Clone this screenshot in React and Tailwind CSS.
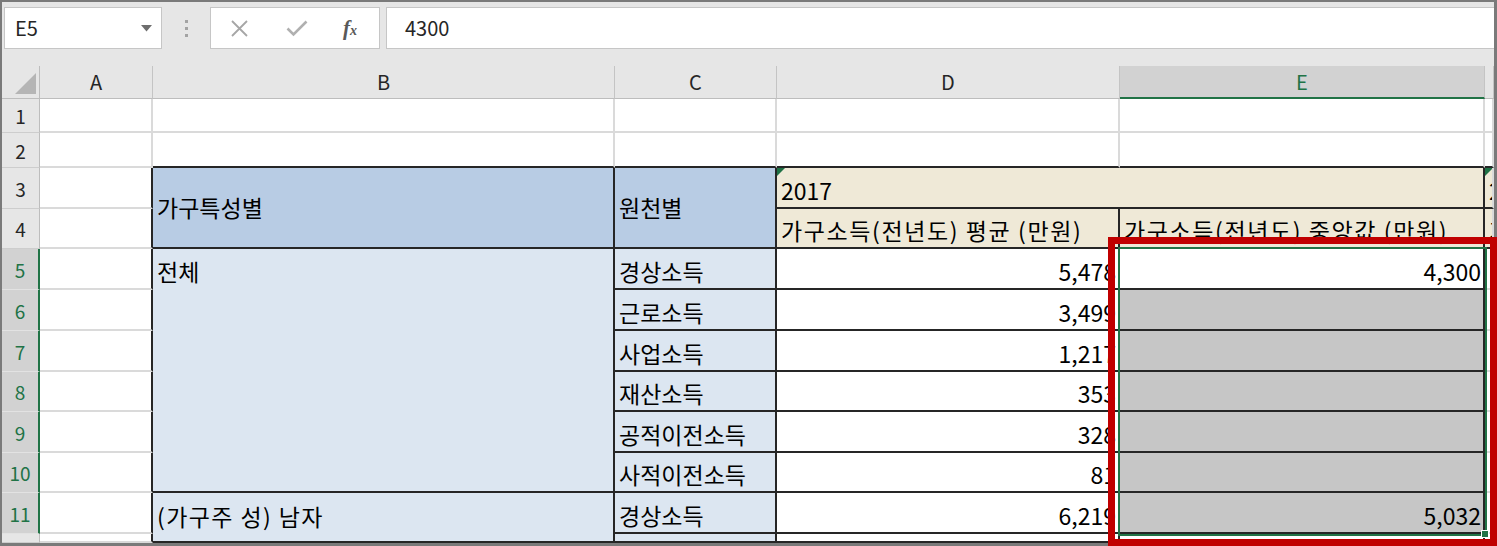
const FONT = "font-['Noto_Sans_CJK_KR','Noto_Sans',sans-serif]"

const GR = 'border-r-[#dadada]'
const GB = 'border-b-[#dadada]'
const DR = 'border-r-[#262626]'
const DB = 'border-b-[#262626]'

const HEAD = 'bg-[#b8cce4]'
const SOFT = 'bg-[#dce6f1]'
const TAN = 'bg-[#efe9d7]'
const SEL = 'bg-[#c6c6c6]'

function Cell({ bg = 'bg-white', r = GR, b = GB, className = '', children }) {
  return (
    <div className={`relative flex overflow-hidden whitespace-nowrap border-r-2 border-b-2 ${bg} ${r} ${b} ${className}`}>
      {children}
    </div>
  )
}

function Flag() {
  return <span className="absolute left-0 top-0 h-0 w-0 border-t-[8px] border-r-[8px] border-t-[#1e7145] border-r-transparent" />
}

function RowHead({ n, sel }) {
  return (
    <div
      className={`flex items-center justify-center border-b text-[19px] ${
        sel
          ? 'border-r-2 border-r-[#217346] border-b-[#e2e2e2] bg-[#d2d2d2] text-[#217346]'
          : 'border-r border-r-[#bdbdbd] border-b-[#cdcdcd] bg-[#e6e6e6] text-[#262626]'
      }`}
    >
      {n}
    </div>
  )
}

function ColHead({ l, sel }) {
  return (
    <div
      className={`flex items-center justify-center border-r border-r-[#c4c4c4] text-[20px] ${
        sel
          ? 'border-b-2 border-b-[#217346] bg-[#d2d2d2] text-[#217346]'
          : 'border-b border-b-[#bdbdbd] bg-[#e6e6e6] text-[#262626]'
      }`}
    >
      {l}
    </div>
  )
}

const rows = [
  { n: 6, c: '근로소득', d: '3,499' },
  { n: 7, c: '사업소득', d: '1,217' },
  { n: 8, c: '재산소득', d: '353' },
  { n: 9, c: '공적이전소득', d: '328' },
  { n: 10, c: '사적이전소득', d: '81' },
]

const label = 'items-end pb-[5px] pl-[4px]'
const num = 'items-end justify-end pb-[5px] pr-[2px]'

export default function App() {
  return (
    <div className={`relative h-[546px] w-[1497px] overflow-hidden bg-white text-black ${FONT}`}>
      <div className="flex h-full flex-col border-t-2 border-l-2 border-r-[3px] border-b-[3px] border-[#7a7a7a]">
        {/* formula bar */}
        <div className="flex h-[64px] shrink-0 items-start bg-[#e6e6e6] pt-[5px] pl-[2px]">
          <div className="flex h-[42px] w-[158px] items-center justify-between border border-[#c6c6c6] bg-white pl-[10px] pr-[9px] text-[20px] text-[#262626]">
            <span>E5</span>
            <svg width="11" height="7" viewBox="0 0 11 7">
              <path d="M0 0h11L5.5 6.5z" fill="#6e6e6e" />
            </svg>
          </div>
          <div className="flex h-[42px] w-[48px] flex-col items-center justify-center gap-[4px]">
            <span className="h-[3px] w-[3px] bg-[#a3a3a3]" />
            <span className="h-[3px] w-[3px] bg-[#a3a3a3]" />
            <span className="h-[3px] w-[3px] bg-[#a3a3a3]" />
          </div>
          <div className="flex h-[42px] w-[170px] items-center border border-[#c6c6c6] bg-white">
            <svg className="ml-[19px]" width="19" height="19" viewBox="0 0 19 19">
              <path d="M2 2l15 15M17 2L2 17" stroke="#a6a6a6" strokeWidth="1.8" fill="none" />
            </svg>
            <svg className="ml-[37px]" width="22" height="17" viewBox="0 0 22 17">
              <path d="M1.5 8.5l6 6L20.5 1.5" stroke="#b0b0b0" strokeWidth="2.6" fill="none" />
            </svg>
            <span className="ml-[35px] font-['Liberation_Serif',serif] text-[21px] font-bold italic leading-none text-[#595959]">
              f<span className="text-[14px]">x</span>
            </span>
          </div>
          <div className="ml-[6px] flex h-[42px] flex-1 items-center border-y border-l border-[#c6c6c6] bg-white pl-[18px] text-[20px] text-[#262626]">
            4300
          </div>
        </div>

        {/* sheet */}
        <div className="grid h-[477px] grid-cols-[38px_113px_462px_162px_343px_365px_1fr] grid-rows-[33px_34px_35px_41px_40px_41px_41px_41px_40px_41px_40px_41px_1fr] text-[23px] leading-none">
          <div className="relative border-r border-b border-r-[#bdbdbd] border-b-[#bdbdbd] bg-[#e6e6e6]">
            <svg className="absolute right-[3px] bottom-[4px]" width="21" height="21" viewBox="0 0 21 21">
              <path d="M21 0v21H0z" fill="#b5b5b5" />
            </svg>
          </div>
          <ColHead l="A" />
          <ColHead l="B" />
          <ColHead l="C" />
          <ColHead l="D" />
          <ColHead l="E" sel />
          <ColHead l="" />

          {/* row 1 */}
          <RowHead n={1} />
          <Cell />
          <Cell />
          <Cell />
          <Cell />
          <Cell />
          <Cell />

          {/* row 2 */}
          <RowHead n={2} />
          <Cell />
          <Cell b={DB} />
          <Cell b={DB} />
          <Cell b={DB} />
          <Cell b={DB} />
          <Cell b={DB} />

          {/* row 3 */}
          <RowHead n={3} />
          <Cell r={DR} />
          <Cell bg={HEAD} r={DR} b={DB} className="row-span-2 items-center pl-[4px]">가구특성별</Cell>
          <Cell bg={HEAD} r={DR} b={DB} className="row-span-2 items-center pl-[4px]">원천별</Cell>
          <Cell bg={TAN} r={DR} b={DB} className={`col-span-2 ${label}`}>
            <Flag />
            2017
          </Cell>
          <Cell bg={TAN} b={DB} className={label}>
            <Flag />
            2018
          </Cell>

          {/* row 4 */}
          <RowHead n={4} />
          <Cell r={DR} />
          <Cell bg={TAN} r={DR} b={DB} className={`${label} tracking-[1.6px]`}>가구소득(전년도) 평균 (만원)</Cell>
          <Cell bg={TAN} r={DR} b={DB} className={`${label} tracking-[1.6px]`}>가구소득(전년도) 중앙값 (만원)</Cell>
          <Cell bg={TAN} b={DB} className={label}>가구소득</Cell>

          {/* row 5 */}
          <RowHead n={5} sel />
          <Cell r={DR} />
          <Cell bg={SOFT} r={DR} b={DB} className="row-span-6 items-start pt-[11px] pl-[4px]">전체</Cell>
          <Cell bg={SOFT} r={DR} b={DB} className={label}>경상소득</Cell>
          <Cell r={DR} b={DB} className={num}>5,478</Cell>
          <Cell r={DR} b={DB} className={num}>4,300</Cell>
          <Cell />

          {rows.map((row) => (
            <div key={row.n} className="contents">
              <RowHead n={row.n} sel />
              <Cell r={DR} />
              <Cell bg={SOFT} r={DR} b={DB} className={label}>{row.c}</Cell>
              <Cell r={DR} b={DB} className={num}>{row.d}</Cell>
              <Cell bg={SEL} r={DR} b={DB} />
              <Cell />
            </div>
          ))}

          {/* row 11 */}
          <RowHead n={11} sel />
          <Cell r={DR} />
          <Cell bg={SOFT} r={DR} b={DB} className="row-span-2 items-start pt-[12px] pl-[4px] tracking-[1.4px]">(가구주 성) 남자</Cell>
          <Cell bg={SOFT} r={DR} b={DB} className={label}>경상소득</Cell>
          <Cell r={DR} b={DB} className={num}>6,219</Cell>
          <Cell bg={SEL} r={DR} b={DB} className={num}>5,032</Cell>
          <Cell />

          {/* row 12, only its top edge shows */}
          <RowHead n="" />
          <Cell r={DR} />
          <Cell bg={SOFT} r={DR} b={DB} />
          <Cell r={DR} b={DB} />
          <Cell r={DR} b={DB} />
          <Cell />
        </div>
      </div>

      {/* selection range E5:E11 */}
      <div className="absolute left-[1118px] top-[247px] h-[289px] w-[369px] border-2 border-[#217346]" />
      <div className="absolute left-[1481px] top-[530px] h-[8px] w-[8px] border border-white bg-[#217346]" />

      {/* red highlight box */}
      <div className="absolute left-[1108px] top-[237px] h-[309px] w-[389px] border-[7px] border-[#c00000]" />
    </div>
  )
}
